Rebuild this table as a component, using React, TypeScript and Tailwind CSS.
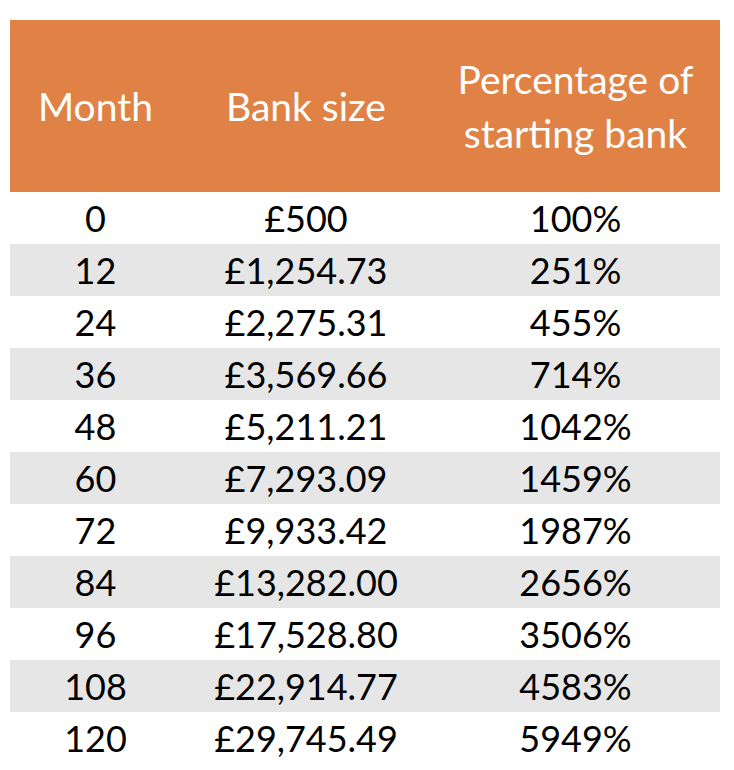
import React from "react";

const rows: [string, string, string][] = [
  ["0", "£500", "100%"],
  ["12", "£1,254.73", "251%"],
  ["24", "£2,275.31", "455%"],
  ["36", "£3,569.66", "714%"],
  ["48", "£5,211.21", "1042%"],
  ["60", "£7,293.09", "1459%"],
  ["72", "£9,933.42", "1987%"],
  ["84", "£13,282.00", "2656%"],
  ["96", "£17,528.80", "3506%"],
  ["108", "£22,914.77", "4583%"],
  ["120", "£29,745.49", "5949%"],
];

export default function App() {
  return (
    <div className="w-[734px] h-[770px] bg-white pt-[20px] pl-[10px] font-['Lato',sans-serif]">
      <div className="w-[710px] flex flex-col">
        <div className="h-[172px] bg-[#e08246] text-white flex items-center text-[39px] leading-[54px]">
          <div className="w-[171px] text-center">Month</div>
          <div className="w-[250px] text-center">Bank size</div>
          <div className="w-[289px] text-center">
            Percentage of
            <br />
            starting bank
          </div>
        </div>
        {rows.map((r, i) => (
          <div
            key={r[0]}
            className={`h-[52px] flex items-center text-[36px] text-black ${i % 2 === 1 ? "bg-[#e6e6e6]" : "bg-white"}`}
          >
            <div className="w-[171px] text-center">{r[0]}</div>
            <div className="w-[250px] text-center">{r[1]}</div>
            <div className="w-[289px] text-center">{r[2]}</div>
          </div>
        ))}
      </div>
    </div>
  );
}
